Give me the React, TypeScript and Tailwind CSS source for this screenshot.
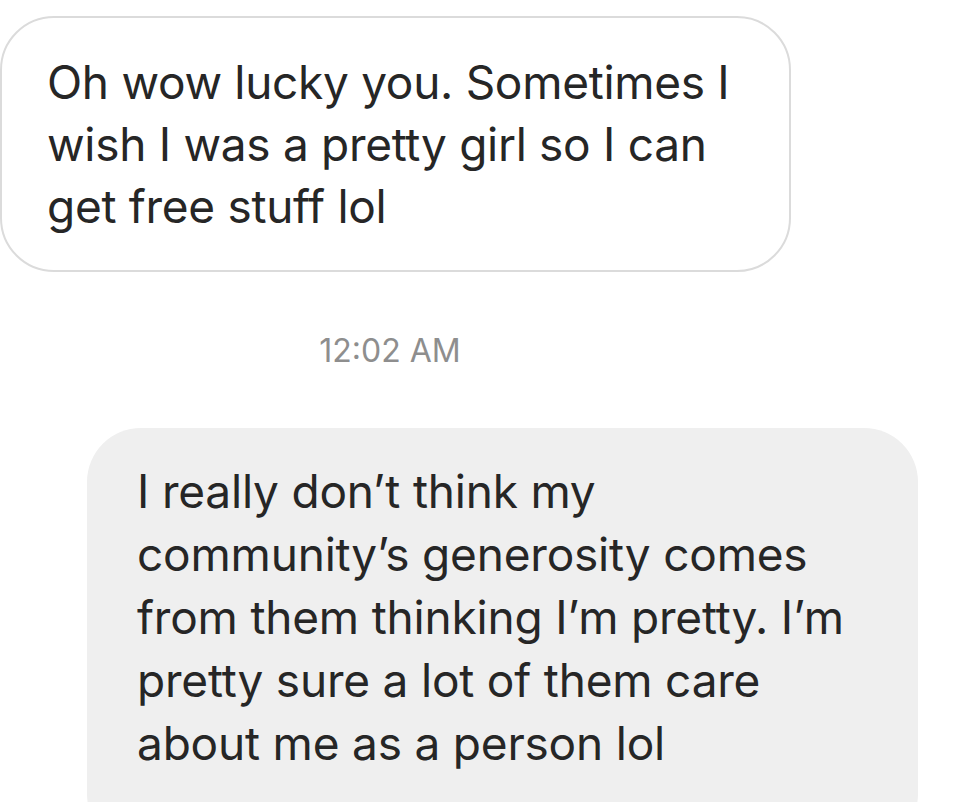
const lines1 = [
  "Oh wow lucky you. Sometimes I",
  "wish I was a pretty girl so I can",
  "get free stuff lol",
];

const lines2 = [
  "I really don’t think my",
  "community’s generosity comes",
  "from them thinking I’m pretty. I’m",
  "pretty sure a lot of them care",
  "about me as a person lol",
];

export default function App() {
  return (
    <div className="w-[953px] h-[802px] overflow-hidden bg-white text-[#262626] font-['Inter','Liberation_Sans',sans-serif]">
      {/* received message */}
      <div className="mt-[16px] w-[791px] h-[256px] rounded-[54px] border-2 border-[#dbdbdb] pl-[45px] pt-[33px]">
        <p className="text-[46px] leading-[62px] tracking-[-0.3px]">
          {lines1.map((l, i) => (
            <span key={i} className="block whitespace-nowrap">{l}</span>
          ))}
        </p>
      </div>

      {/* timestamp */}
      <div className="w-[780px] pt-[61px] text-center text-[32px] leading-[36px] text-[#8e8e8e]">
        12:02 AM
      </div>

      {/* sent message */}
      <div className="ml-[87px] mt-[59px] w-[831px] h-[420px] rounded-[54px] bg-[#efefef] pl-[50px] pt-[32px]">
        <p className="text-[46px] leading-[63px] tracking-[-0.2px]">
          {lines2.map((l, i) => (
            <span key={i} className="block whitespace-nowrap">{l}</span>
          ))}
        </p>
      </div>
    </div>
  );
}
